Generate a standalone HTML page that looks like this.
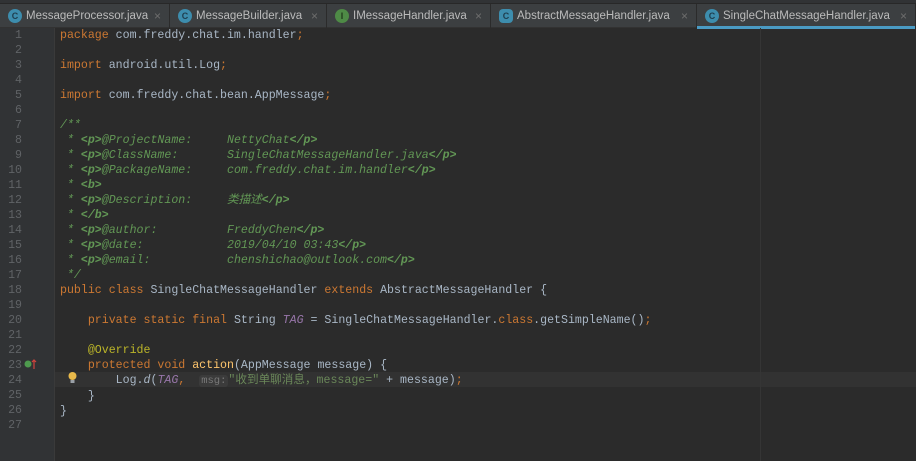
<!DOCTYPE html>
<html><head><meta charset="utf-8"><style>
*{margin:0;padding:0;box-sizing:border-box}
body{width:916px;height:461px;background:#2b2b2b;overflow:hidden;position:relative;font-family:"Liberation Mono","Noto Sans CJK SC",monospace}
.topbar{position:absolute;left:0;top:0;width:916px;height:4px;background:#313335;border-bottom:1px solid #282828}
.tabs{position:absolute;left:0;top:4px;width:916px;height:24px;background:#3c3f41;border-bottom:1px solid #323232}
.tab{position:absolute;top:0;height:24px;border-right:1px solid #2b2b2b;font:11.5px "Liberation Sans",sans-serif;color:#bbbbbb;line-height:24px;white-space:nowrap}
.tab .ic{position:absolute;left:8px;top:5px;width:14px;height:14px;border-radius:50%;background:#3d8dad;color:#1e3d4d;font:bold 9px "Liberation Sans",sans-serif;line-height:14px;text-align:center}
.tab .t{position:absolute;left:26px;top:0}
.tab .x{position:absolute;right:8px;top:0;color:#6e6e6e;font-size:12px}
.tab.act:after{content:"";position:absolute;left:0;right:0;bottom:-1px;height:3px;background:#4a9bc4}
.gutter{position:absolute;left:0;top:28px;width:55px;height:433px;background:#313335;border-right:1px solid #3a3a3a}
.margin{position:absolute;left:760px;top:28px;width:1px;height:433px;background:#353535}
.cur{position:absolute;left:55px;top:372px;width:861px;height:15px;background:#323232}
.ln{position:absolute;left:0;width:22px;text-align:right;color:#606366;font-size:11.6px;line-height:15px}
.code{position:absolute;left:60px;top:28px;font-size:11.6px;line-height:15px;color:#a9b7c6;white-space:pre}
.k{color:#cc7832}.dc{color:#629755;font-style:italic}.dt{color:#629755;font-style:italic;font-weight:bold}
.s{color:#6a8759}.a{color:#bbb529}.f{color:#ffc66d}.st{color:#9876aa;font-style:italic}.it{font-style:italic}
.hint{background:#3b3b3b;color:#787878;border-radius:3px;padding:0 2px;font-size:10.5px}
</style></head><body>
<div class="topbar"></div>
<div class="tabs">
<div class="tab" style="left:0;width:170px"><span class="ic">C</span><span class="t">MessageProcessor.java</span><span class="x">×</span></div>
<div class="tab" style="left:170px;width:157px"><span class="ic">C</span><span class="t">MessageBuilder.java</span><span class="x">×</span></div>
<div class="tab" style="left:327px;width:164px"><span class="ic" style="background:#4e8a46;color:#1f3a1c">I</span><span class="t">IMessageHandler.java</span><span class="x">×</span></div>
<div class="tab" style="left:491px;width:206px"><span class="ic" style="border-radius:4px">C</span><span class="t">AbstractMessageHandler.java</span><span class="x">×</span></div>
<div class="tab act" style="left:697px;width:219px"><span class="ic">C</span><span class="t">SingleChatMessageHandler.java</span><span class="x">×</span></div>
</div>
<div class="gutter"></div>
<div class="cur"></div>
<div class="margin"></div>
<div id="lns"></div>
<svg style="position:absolute;left:24px;top:357px" width="14" height="14"><circle cx="4" cy="7" r="3.5" fill="#4e9a4e"/><path d="M10 12V3M8 5l2-2 2 2" stroke="#d0443c" stroke-width="1.2" fill="none"/></svg>
<svg style="position:absolute;left:67px;top:371px" width="11" height="14"><circle cx="5.5" cy="5" r="4" fill="#e8b94a"/><rect x="3.5" y="9" width="4" height="3" fill="#9aa0a6"/></svg>
<div class="code"><span class="k">package</span> com.freddy.chat.im.handler<span class="k">;</span>

<span class="k">import</span> android.util.Log<span class="k">;</span>

<span class="k">import</span> com.freddy.chat.bean.AppMessage<span class="k">;</span>

<span class="dc">/**</span>
<span class="dc"> * </span><span class="dt">&lt;p&gt;</span><span class="dc">@ProjectName:     NettyChat</span><span class="dt">&lt;/p&gt;</span>
<span class="dc"> * </span><span class="dt">&lt;p&gt;</span><span class="dc">@ClassName:       SingleChatMessageHandler.java</span><span class="dt">&lt;/p&gt;</span>
<span class="dc"> * </span><span class="dt">&lt;p&gt;</span><span class="dc">@PackageName:     com.freddy.chat.im.handler</span><span class="dt">&lt;/p&gt;</span>
<span class="dc"> * </span><span class="dt">&lt;b&gt;</span>
<span class="dc"> * </span><span class="dt">&lt;p&gt;</span><span class="dc">@Description:     类描述</span><span class="dt">&lt;/p&gt;</span>
<span class="dc"> * </span><span class="dt">&lt;/b&gt;</span>
<span class="dc"> * </span><span class="dt">&lt;p&gt;</span><span class="dc">@author:          FreddyChen</span><span class="dt">&lt;/p&gt;</span>
<span class="dc"> * </span><span class="dt">&lt;p&gt;</span><span class="dc">@date:            2019/04/10 03:43</span><span class="dt">&lt;/p&gt;</span>
<span class="dc"> * </span><span class="dt">&lt;p&gt;</span><span class="dc">@email:           chenshichao@outlook.com</span><span class="dt">&lt;/p&gt;</span>
<span class="dc"> */</span>
<span class="k">public class</span> SingleChatMessageHandler <span class="k">extends</span> AbstractMessageHandler {

    <span class="k">private static final</span> String <span class="st">TAG</span> = SingleChatMessageHandler.<span class="k">class</span>.getSimpleName()<span class="k">;</span>

    <span class="a">@Override</span>
    <span class="k">protected void</span> <span class="f">action</span>(AppMessage message) {
        Log.<span class="it">d</span>(<span class="st">TAG</span><span class="k">,</span>  <span class="hint">msg:</span><span class="s">"收到单聊消息，message="</span> + message)<span class="k">;</span>
    }
}
</div>
<script>
var h='';for(var i=1;i<=27;i++){h+='<div class="ln" style="top:'+(28+(i-1)*15)+'px">'+i+'</div>';}
document.getElementById('lns').innerHTML=h;
</script>
</body></html>
